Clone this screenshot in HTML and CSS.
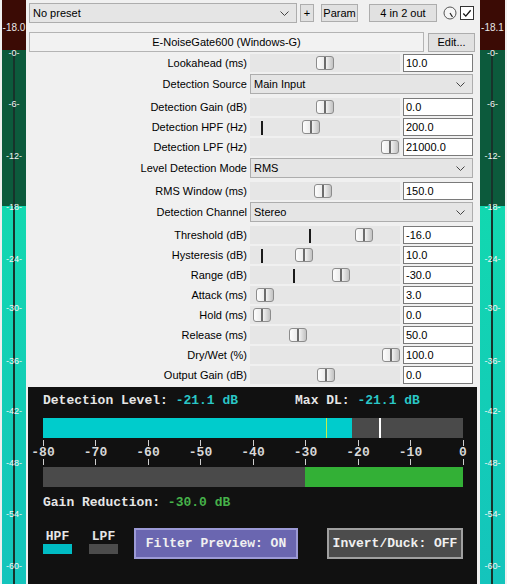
FILE: index.html
```html
<!DOCTYPE html>
<html lang="en">
<head>
    <meta charset="UTF-8">
    <title>E-NoiseGate600</title>
    <link rel="stylesheet" href="styles.css">
</head>
<body>
<div class="host">
    <div class="meter">
        <div class="meter-peak">-18.0</div>
        <span class="meter-tick" style="top:47px">-0-</span>
        <span class="meter-tick" style="top:98px">-6-</span>
        <span class="meter-tick" style="top:150px">-12-</span>
        <span class="meter-tick" style="top:201px">-18-</span>
        <span class="meter-tick" style="top:253px">-24-</span>
        <span class="meter-tick" style="top:302px">-30-</span>
        <span class="meter-tick" style="top:355px">-36-</span>
        <span class="meter-tick" style="top:405px">-42-</span>
        <span class="meter-tick" style="top:457px">-48-</span>
        <span class="meter-tick" style="top:508px">-54-</span>
        <span class="meter-tick" style="top:560px">-60-</span>
    </div>

    <div class="main">
        <div class="toolbar">
            <div class="select preset">
                <span>No preset</span>
                <svg class="chevron" width="9" height="5" viewBox="0 0 9 5"><path d="M0.5 0.5 L4.5 4.5 L8.5 0.5" fill="none" stroke="#444" stroke-width="1"/></svg>
            </div>
            <button class="btn btn-plus">+</button>
            <button class="btn btn-param">Param</button>
            <button class="btn btn-io">4 in 2 out</button>
            <svg class="knob" width="14" height="14" viewBox="0 0 14 14">
                <circle cx="7" cy="7" r="6" fill="#f6f6f6" stroke="#555" stroke-width="1"/>
                <path d="M7 7 L9.5 11" stroke="#222" stroke-width="1.2"/>
            </svg>
            <span class="check">
                <svg width="13" height="13" viewBox="0 0 13 13"><path d="M2.5 6.5 L5.2 9.3 L10.5 3" fill="none" stroke="#111" stroke-width="1.4"/></svg>
            </span>
        </div>

        <div class="namebar">
            <div class="name">E-NoiseGate600 (Windows-G)</div>
            <button class="btn btn-edit">Edit...</button>
        </div>

        <div class="params">
            <div class="row">
                <span class="lbl">Lookahead (ms)</span>
                <div class="slider"><span class="thumb" style="left:66px"></span></div>
                <div class="field">10.0</div>
            </div>
            <div class="row row-sel">
                <span class="lbl">Detection Source</span>
                <div class="select wide"><span>Main Input</span><svg class="chevron" width="9" height="5" viewBox="0 0 9 5"><path d="M0.5 0.5 L4.5 4.5 L8.5 0.5" fill="none" stroke="#444" stroke-width="1"/></svg></div>
            </div>
            <div class="row">
                <span class="lbl">Detection Gain (dB)</span>
                <div class="slider"><span class="thumb" style="left:66px"></span></div>
                <div class="field">0.0</div>
            </div>
            <div class="row">
                <span class="lbl">Detection HPF (Hz)</span>
                <div class="slider"><span class="mark" style="left:11px"></span><span class="thumb" style="left:52px"></span></div>
                <div class="field">200.0</div>
            </div>
            <div class="row">
                <span class="lbl">Detection LPF (Hz)</span>
                <div class="slider"><span class="thumb" style="left:131px"></span></div>
                <div class="field">21000.0</div>
            </div>
            <div class="row row-sel">
                <span class="lbl">Level Detection Mode</span>
                <div class="select wide"><span>RMS</span><svg class="chevron" width="9" height="5" viewBox="0 0 9 5"><path d="M0.5 0.5 L4.5 4.5 L8.5 0.5" fill="none" stroke="#444" stroke-width="1"/></svg></div>
            </div>
            <div class="row">
                <span class="lbl">RMS Window (ms)</span>
                <div class="slider"><span class="thumb" style="left:64px"></span></div>
                <div class="field">150.0</div>
            </div>
            <div class="row row-sel">
                <span class="lbl">Detection Channel</span>
                <div class="select wide"><span>Stereo</span><svg class="chevron" width="9" height="5" viewBox="0 0 9 5"><path d="M0.5 0.5 L4.5 4.5 L8.5 0.5" fill="none" stroke="#444" stroke-width="1"/></svg></div>
            </div>
            <div class="row">
                <span class="lbl">Threshold (dB)</span>
                <div class="slider"><span class="mark" style="left:59px"></span><span class="thumb" style="left:105px"></span></div>
                <div class="field">-16.0</div>
            </div>
            <div class="row">
                <span class="lbl">Hysteresis (dB)</span>
                <div class="slider"><span class="mark" style="left:11px"></span><span class="thumb" style="left:45px"></span></div>
                <div class="field">10.0</div>
            </div>
            <div class="row">
                <span class="lbl">Range (dB)</span>
                <div class="slider"><span class="mark" style="left:43px"></span><span class="thumb" style="left:82px"></span></div>
                <div class="field">-30.0</div>
            </div>
            <div class="row">
                <span class="lbl">Attack (ms)</span>
                <div class="slider"><span class="thumb" style="left:6px"></span></div>
                <div class="field">3.0</div>
            </div>
            <div class="row">
                <span class="lbl">Hold (ms)</span>
                <div class="slider"><span class="thumb" style="left:3px"></span></div>
                <div class="field">0.0</div>
            </div>
            <div class="row">
                <span class="lbl">Release (ms)</span>
                <div class="slider"><span class="thumb" style="left:39px"></span></div>
                <div class="field">50.0</div>
            </div>
            <div class="row">
                <span class="lbl">Dry/Wet (%)</span>
                <div class="slider"><span class="thumb" style="left:132px"></span></div>
                <div class="field">100.0</div>
            </div>
            <div class="row">
                <span class="lbl">Output Gain (dB)</span>
                <div class="slider"><span class="thumb" style="left:67px"></span></div>
                <div class="field">0.0</div>
            </div>
        </div>

        <div class="panel">
            <div class="readout">
                <span class="level">Detection Level: <span class="cyan">-21.1 dB</span></span>
                <span class="maxdl">Max DL: <span class="cyan">-21.1 dB</span></span>
            </div>
            <div class="bar">
                <div class="bar-fill" style="width:309px"></div>
                <span class="bar-line hold" style="left:283px"></span>
                <span class="bar-line thr" style="left:336px"></span>
            </div>
            <div class="scale">
                <div class="scale-step"><i></i><b>-80</b><i></i></div>
                <div class="scale-step"><i></i><b>-70</b><i></i></div>
                <div class="scale-step"><i></i><b>-60</b><i></i></div>
                <div class="scale-step"><i></i><b>-50</b><i></i></div>
                <div class="scale-step"><i></i><b>-40</b><i></i></div>
                <div class="scale-step"><i></i><b>-30</b><i></i></div>
                <div class="scale-step"><i></i><b>-20</b><i></i></div>
                <div class="scale-step"><i></i><b>-10</b><i></i></div>
                <div class="scale-step"><i></i><b>0</b><i></i></div>
            </div>
            <div class="bar gr">
                <div class="gr-fill" style="width:158px"></div>
            </div>
            <div class="readout gain">Gain Reduction: <span class="green">-30.0 dB</span></div>
            <div class="controls">
                <div class="legend">
                    <span>HPF</span>
                    <span class="swatch on"></span>
                </div>
                <div class="legend">
                    <span>LPF</span>
                    <span class="swatch"></span>
                </div>
                <button class="pbtn preview">Filter Preview: ON</button>
                <button class="pbtn invert">Invert/Duck: OFF</button>
            </div>
        </div>
    </div>

    <div class="meter right">
        <div class="meter-peak">-18.1</div>
        <span class="meter-tick" style="top:47px">-0-</span>
        <span class="meter-tick" style="top:98px">-6-</span>
        <span class="meter-tick" style="top:150px">-12-</span>
        <span class="meter-tick" style="top:201px">-18-</span>
        <span class="meter-tick" style="top:253px">-24-</span>
        <span class="meter-tick" style="top:302px">-30-</span>
        <span class="meter-tick" style="top:355px">-36-</span>
        <span class="meter-tick" style="top:405px">-42-</span>
        <span class="meter-tick" style="top:457px">-48-</span>
        <span class="meter-tick" style="top:508px">-54-</span>
        <span class="meter-tick" style="top:560px">-60-</span>
    </div>
</div>
</body>
</html>
```

FILE: styles.css
```css
* {
    box-sizing: border-box;
}

body {
    margin: 0;
    background: #f0f0f0;
    font-family: "Liberation Sans", Arial, sans-serif;
    font-size: 11px;
    color: #000;
}

.host {
    display: flex;
    height: 584px;
    overflow: hidden;
}

/* level meters on both sides */
.meter {
    position: relative;
    flex-shrink: 0;
    width: 24px;
    margin-left: 2px;
    background: linear-gradient(to bottom,
        #0c5a3c 0, #0c5a3c 206px,
        #12d8b0 206px, #14c4bc 584px);
}

.meter.right {
    width: 25px;
    margin-left: 3px;
}

.meter::before {
    content: "";
    position: absolute;
    left: 11px;
    top: 50px;
    bottom: 0;
    width: 2px;
    background: #17332b;
}

.meter-peak {
    position: relative;
    z-index: 1;
    height: 50px;
    background: #3b0b05;
    color: #e8e8e8;
    font-size: 10px;
    line-height: 12px;
    padding-top: 22px;
    text-align: center;
}

.meter-tick {
    position: absolute;
    left: -4px;
    right: -4px;
    z-index: 2;
    text-align: center;
    color: #f4f4f4;
    font-size: 9px;
    line-height: 12px;
}

.main {
    flex: 0 0 449px;
    width: 449px;
    margin-left: 2px;
    padding-top: 3px;
    display: flex;
    flex-direction: column;
}

/* top bar */
.toolbar {
    display: flex;
    align-items: center;
    height: 20px;
    margin-left: 1px;
}

.select {
    display: flex;
    align-items: center;
    justify-content: space-between;
    height: 20px;
    background: #e5e5e5;
    border: 1px solid #adadad;
    padding: 0 7px 0 3px;
}

.preset {
    width: 268px;
}

.btn {
    font: inherit;
    color: #000;
    height: 18px;
    padding: 0;
    background: #e1e1e1;
    border: 1px solid #adadad;
}

.btn-plus {
    width: 14px;
    margin-left: 3px;
}

.btn-param {
    width: 37px;
    margin-left: 7px;
}

.btn-io {
    width: 68px;
    margin-left: 11px;
}

.knob {
    margin-left: 6px;
}

.check {
    display: flex;
    width: 14px;
    height: 14px;
    margin-left: 3px;
    background: #fff;
    border: 1px solid #333;
    align-items: center;
    justify-content: center;
}

.namebar {
    display: flex;
    align-items: center;
    height: 20px;
    margin-top: 9px;
    margin-left: 1px;
}

.name {
    width: 395px;
    height: 20px;
    line-height: 18px;
    text-align: center;
    background: #f2f2f2;
    border: 1px solid #b4b4b4;
}

.btn-edit {
    width: 47px;
    height: 19px;
    margin-left: 4px;
}

/* parameter rows */
.params {
    margin-top: 1px;
}

.row {
    display: flex;
    align-items: flex-start;
    height: 20px;
}

.row-sel {
    height: 24px;
}

.lbl {
    width: 219px;
    line-height: 20px;
    text-align: right;
    white-space: nowrap;
}

.row-sel .lbl {
    line-height: 22px;
}

.slider {
    position: relative;
    width: 150px;
    height: 18px;
    margin: 1px 0 0 3px;
    background: #e6e6e6;
}

.thumb {
    position: absolute;
    top: 2px;
    width: 18px;
    height: 14px;
    border: 1px solid #8c8c8c;
    border-radius: 3px;
    background: linear-gradient(to right,
        #fdfdfd 0, #ececec 44%, #6c6c6c 44%, #6c6c6c 56%,
        #f2f2f2 56%, #c2c2c2 100%);
}

.mark {
    position: absolute;
    top: 3px;
    width: 2px;
    height: 14px;
    background: #1a1a1a;
}

.field {
    width: 70px;
    height: 18px;
    margin: 1px 0 0 3px;
    padding-left: 2px;
    line-height: 16px;
    background: #fff;
    border: 1px solid #7a7a7a;
}

.select.wide {
    width: 223px;
    margin: 1px 0 0 3px;
}

/* dark analysis panel */
.panel {
    flex: 1;
    margin-top: 2px;
    padding: 7px 14px 0 15px;
    background: #111;
    color: #e6e6e6;
    font-family: "Liberation Mono", "Courier New", monospace;
    font-weight: bold;
    font-size: 13px;
}

.readout {
    display: flex;
    height: 14px;
    line-height: 14px;
    white-space: pre;
}

.maxdl {
    margin-left: 57px;
}

.cyan {
    color: #2ac6c6;
}

.green {
    color: #46b24a;
}

.bar {
    position: relative;
    height: 20px;
    margin-top: 10px;
    background: #4a4a4a;
}

.bar-fill {
    height: 100%;
    background: #00cccc;
}

.bar-line {
    position: absolute;
    top: 0;
    height: 20px;
}

.bar-line.hold {
    width: 1px;
    background: #c6ec4a;
}

.bar-line.thr {
    width: 2px;
    background: #fff;
}

.scale {
    display: flex;
    justify-content: space-between;
    height: 29px;
    padding-top: 2px;
}

.scale-step {
    display: flex;
    flex-direction: column;
    align-items: center;
    width: 0;
}

.scale-step i {
    width: 1px;
    height: 6px;
    background: #cfcfcf;
    flex-shrink: 0;
}

.scale-step b {
    line-height: 13px;
    height: 13px;
    color: #d8d8d8;
    white-space: nowrap;
}

.bar.gr {
    margin-top: 0;
    display: flex;
    justify-content: flex-end;
}

.gr-fill {
    height: 100%;
    background: #33b036;
}

.readout.gain {
    margin-top: 9px;
}

.controls {
    display: flex;
    align-items: flex-start;
    margin-top: 18px;
}

.legend {
    display: flex;
    flex-direction: column;
    align-items: center;
    padding-top: 2px;
    margin-right: 17px;
    line-height: 13px;
}

.swatch {
    width: 29px;
    height: 10px;
    margin-top: 1px;
    background: #4c4c4c;
}

.swatch.on {
    background: #00bcc4;
}

.pbtn {
    height: 31px;
    padding: 0;
    font: inherit;
    color: #f0f0f0;
    border: 2px solid #a0a0a0;
}

.preview {
    width: 164px;
    margin-left: -1px;
    background: #6a66b0;
    border-color: #9c9ad6;
}

.invert {
    width: 136px;
    margin-left: auto;
    background: #4c4c4c;
}
```
